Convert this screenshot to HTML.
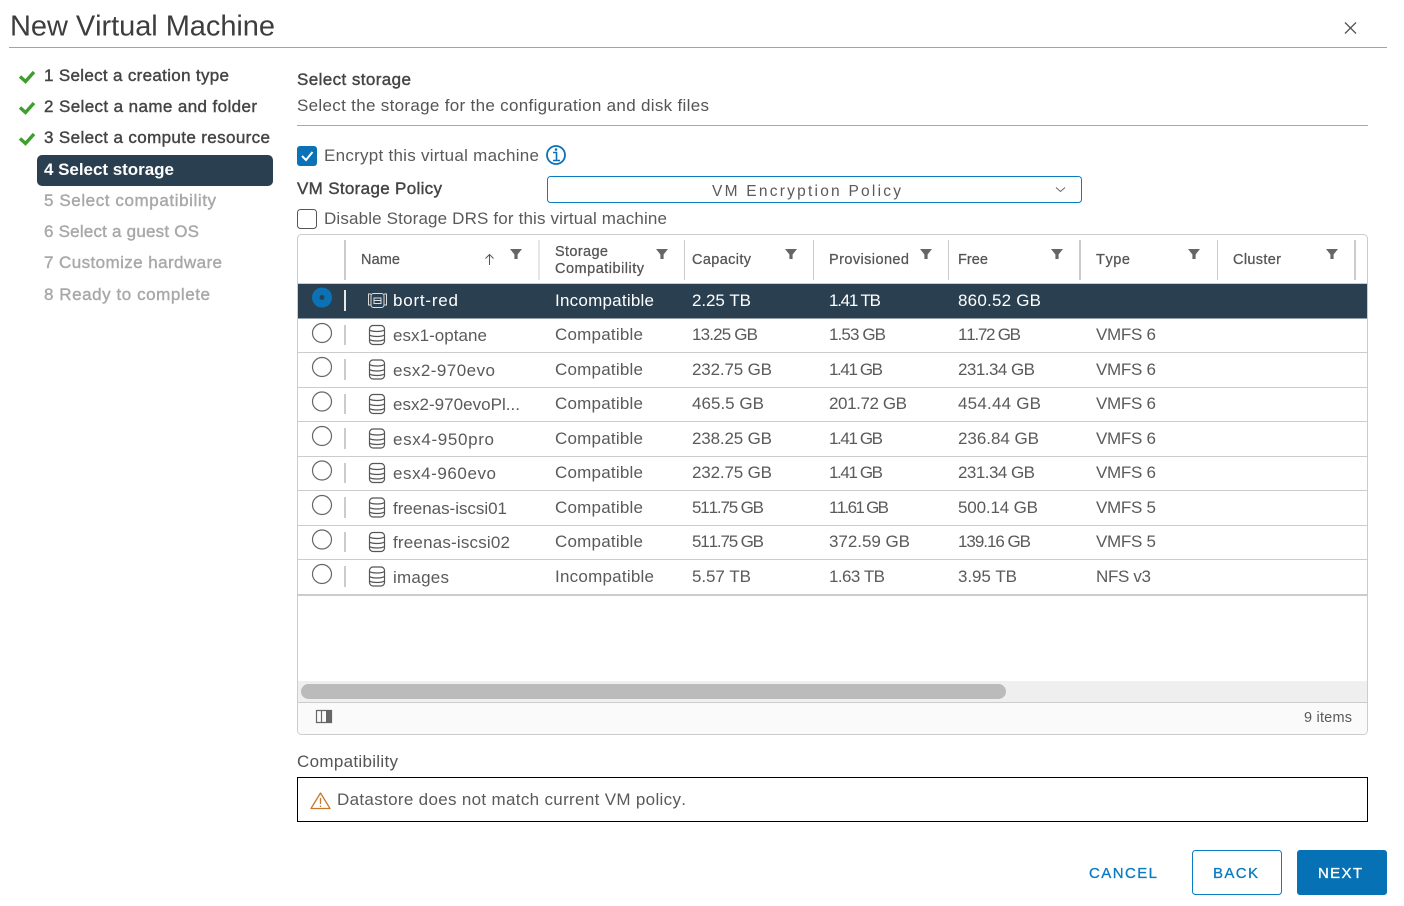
<!DOCTYPE html>
<html lang="en"><head><meta charset="utf-8"><title>New Virtual Machine</title>
<style>
html,body{margin:0;padding:0;background:#fff;width:1404px;height:906px;overflow:hidden}
svg{display:block}
text{font-family:"Liberation Sans",sans-serif;font-size:17px;fill:#5a5a5a;white-space:pre;font-kerning:none}
.w{font-size:17px;fill:#444;stroke:#444;stroke-width:.4}
.d{font-size:17px;fill:#a8a8a8;stroke:#a8a8a8;stroke-width:.4}
.s{fill:#fff}
.b{fill:#444;stroke:#444;stroke-width:.4}
.h{font-size:14.5px;fill:#555;stroke:#555;stroke-width:.25}
.btn{font-size:15px;letter-spacing:2px;stroke-width:.3}
.sep{stroke:#ccc;stroke-width:2}
.rl{stroke:#ccc;stroke-width:1}
.radio{fill:#fff;stroke:#666;stroke-width:1.2}
.f{fill:#666}
.db{fill:none;stroke:#555;stroke-width:1.2}
</style></head><body>
<svg width="1404" height="906" viewBox="0 0 1404 906" xmlns="http://www.w3.org/2000/svg">
<defs>
<g id="flt"><path d="M-6 -5H6L1.6 0.5V5H-1.6V0.5Z" class="f"/></g>
<g id="db"><rect x="1" y="1" width="15" height="19" rx="3.5" class="db"/><path d="M1 5.5C4 7.5 13 7.5 16 5.5M1 10.5C4 12.5 13 12.5 16 10.5M1 15C4 17 13 17 16 15" class="db"/></g>
</defs>

<text x="10" y="35.500" textLength="265" style="font-size:29px;fill:#3d3d3d">New Virtual Machine</text>
<line x1="9" x2="1387" y1="47.5" y2="47.5" stroke="#a3a3a3"/>
<path d="M1345 22.500L1356 33.500M1356 22.500L1345 33.500" stroke="#555" stroke-width="1.300" fill="none"/>

<path d="M20 76.500L25.500 81.500L34 72" stroke="#3f9e2f" stroke-width="3.400" fill="none"/>
<path d="M20 107.500L25.500 112.500L34 103" stroke="#3f9e2f" stroke-width="3.400" fill="none"/>
<path d="M20 138.500L25.500 143.500L34 134" stroke="#3f9e2f" stroke-width="3.400" fill="none"/>
<text class="w" x="44" y="81" textLength="185">1 Select a creation type</text>
<text class="w" x="44" y="112" textLength="213">2 Select a name and folder</text>
<text class="w" x="44" y="143" textLength="226">3 Select a compute resource</text>
<rect x="37" y="155" width="236" height="31" rx="5" fill="#2a3f4f"/>
<text class="s" x="44" y="175" textLength="130" style="font-size:17px;font-weight:bold">4 Select storage</text>
<text class="d" x="44" y="206" textLength="172">5 Select compatibility</text>
<text class="d" x="44" y="237" textLength="155">6 Select a guest OS</text>
<text class="d" x="44" y="268" textLength="178">7 Customize hardware</text>
<text class="d" x="44" y="300" textLength="166">8 Ready to complete</text>

<text class="b" x="297" y="85" textLength="114">Select storage</text>
<text x="297" y="111" textLength="412" style="fill:#555">Select the storage for the configuration and disk files</text>
<line x1="297" x2="1368" y1="125.500" y2="125.500" stroke="#a8a8a8"/>

<rect x="297" y="146" width="20" height="20" rx="3" fill="#0a72b5"/>
<path d="M302 156L306 160L312.500 152" stroke="#fff" stroke-width="2" fill="none"/>
<text x="324" y="161" textLength="215">Encrypt this virtual machine</text>
<circle cx="556" cy="155" r="9" fill="#fff" stroke="#0a72b5" stroke-width="1.800"/>
<path d="M553 152.500H556.500V160M553 160.500H560" stroke="#0a72b5" stroke-width="1.600" fill="none"/><circle cx="556" cy="149.500" r="1.300" fill="#0a72b5"/>
<text class="b" x="297" y="194" textLength="145">VM Storage Policy</text>
<rect x="547.500" y="176.500" width="534" height="26" rx="3" fill="#fff" stroke="#0a7cc1"/>
<text x="712" y="196" textLength="189" style="font-size:15.500px">VM Encryption Policy</text>
<path d="M1056 187.500L1060.500 191.500L1065 187.500" stroke="#666" fill="none"/>
<rect x="297.500" y="209.500" width="19" height="19" rx="3" fill="#fff" stroke="#555"/>
<text x="324" y="224" textLength="343">Disable Storage DRS for this virtual machine</text>

<rect x="297.500" y="234.500" width="1070" height="500" rx="4" fill="#fff" stroke="#ccc"/>
<path d="M298 681H1367V702H298Z" fill="#efefef"/>
<rect x="301" y="684" width="705" height="15" rx="7.500" fill="#bbb"/>
<path d="M298 703H1367V730a4 4 0 0 1-4 4H302a4 4 0 0 1-4-4Z" fill="#fafafa"/>
<line x1="298" x2="1367" y1="702.500" y2="702.500" stroke="#ccc"/>
<path d="M316.500 710.500H331.500V722.500H316.500ZM321.500 710.500V722.500" stroke="#666" stroke-width="1.200" fill="none"/><rect x="326" y="710" width="6" height="13" fill="#666"/>
<text x="1304" y="722" textLength="48" style="font-size:14.500px">9 items</text>

<line class="sep" x1="345" x2="345" y1="240" y2="280"/>
<line class="sep" x1="539" x2="539" y1="240" y2="280" style="stroke-width:1"/>
<line class="sep" x1="684.500" x2="684.500" y1="240" y2="280" style="stroke-width:1"/>
<line class="sep" x1="813.500" x2="813.500" y1="240" y2="280" style="stroke-width:1"/>
<line class="sep" x1="948.500" x2="948.500" y1="240" y2="280" style="stroke-width:1"/>
<line class="sep" x1="1080" x2="1080" y1="240" y2="280"/>
<line class="sep" x1="1217.500" x2="1217.500" y1="240" y2="280" style="stroke-width:1"/>
<line class="sep" x1="1355" x2="1355" y1="240" y2="280"/>
<text class="h" x="361" y="264" textLength="39">Name</text>
<path d="M489.500 265V254.500M485.500 258.500L489.500 254.500L493.500 258.500" stroke="#555" fill="none"/>
<use href="#flt" x="516" y="254"/>
<text class="h" x="555" y="256" textLength="53">Storage</text>
<text class="h" x="555" y="273" textLength="89">Compatibility</text>
<use href="#flt" x="662" y="254"/>
<text class="h" x="692" y="264" textLength="59">Capacity</text>
<use href="#flt" x="791" y="254"/>
<text class="h" x="829" y="264" textLength="80">Provisioned</text>
<use href="#flt" x="926" y="254"/>
<text class="h" x="958" y="264" textLength="30">Free</text>
<use href="#flt" x="1057" y="254"/>
<text class="h" x="1096" y="264" textLength="34">Type</text>
<use href="#flt" x="1194" y="254"/>
<text class="h" x="1233" y="264" textLength="48">Cluster</text>
<use href="#flt" x="1332" y="254"/>

<line class="rl" x1="298" x2="1367" y1="283.500" y2="283.500"/>
<rect x="298" y="284" width="1069" height="34.500" fill="#2a3f4f"/>
<line class="rl" x1="298" x2="1367" y1="352.500" y2="352.500"/>
<line class="rl" x1="298" x2="1367" y1="387.500" y2="387.500"/>
<line class="rl" x1="298" x2="1367" y1="421.500" y2="421.500"/>
<line class="rl" x1="298" x2="1367" y1="456.500" y2="456.500"/>
<line class="rl" x1="298" x2="1367" y1="490.500" y2="490.500"/>
<line class="rl" x1="298" x2="1367" y1="525.500" y2="525.500"/>
<line class="rl" x1="298" x2="1367" y1="559.500" y2="559.500"/>
<line x1="298" x2="1367" y1="595" y2="595" stroke="#ccc" stroke-width="2"/>

<circle cx="322" cy="297.500" r="10" fill="#0a72b5"/><circle cx="322" cy="297.500" r="2.500" fill="#2a3f4f"/>
<line x1="345" x2="345" y1="290" y2="311" stroke="#e8e8e8" stroke-width="2"/>
<path d="M371 294H368.500V305H371M384 294H386.500V305H384" stroke="#ddd" fill="none"/><rect x="371" y="293.500" width="13" height="14" rx="2.500" fill="none" stroke="#ddd"/><path d="M374 298H381V303.500H374ZM374 300.500H381" stroke="#ddd" fill="none"/>
<text class="s" x="393" y="306" textLength="65">bort-red</text>
<text class="s" x="555" y="306" textLength="99">Incompatible</text>
<text class="s" x="692" y="306" textLength="59">2.25 TB</text>
<text class="s" x="829" y="306" textLength="52">1.41 TB</text>
<text class="s" x="958" y="306" textLength="83">860.52 GB</text>

<circle class="radio" cx="322" cy="333" r="9.500"/><line class="sep" x1="345" x2="345" y1="325" y2="345"/><use href="#db" x="368.500" y="324.500"/>
<text x="393" y="341" textLength="94">esx1-optane</text><text x="555" y="340" textLength="88">Compatible</text><text x="692" y="340" textLength="66">13.25 GB</text><text x="829" y="340" textLength="57">1.53 GB</text><text x="958" y="340" textLength="63">11.72 GB</text><text x="1096" y="340" textLength="60">VMFS 6</text>

<circle class="radio" cx="322" cy="367" r="9.500"/><line class="sep" x1="345" x2="345" y1="359" y2="380"/><use href="#db" x="368.500" y="359"/>
<text x="393" y="376" textLength="102">esx2-970evo</text><text x="555" y="375" textLength="88">Compatible</text><text x="692" y="375" textLength="80">232.75 GB</text><text x="829" y="375" textLength="54">1.41 GB</text><text x="958" y="375" textLength="77">231.34 GB</text><text x="1096" y="375" textLength="60">VMFS 6</text>

<circle class="radio" cx="322" cy="401.500" r="9.500"/><line class="sep" x1="345" x2="345" y1="394" y2="414"/><use href="#db" x="368.500" y="393.500"/>
<text x="393" y="410" textLength="127">esx2-970evoPl...</text><text x="555" y="409" textLength="88">Compatible</text><text x="692" y="409" textLength="72">465.5 GB</text><text x="829" y="409" textLength="78">201.72 GB</text><text x="958" y="409" textLength="83">454.44 GB</text><text x="1096" y="409" textLength="60">VMFS 6</text>

<circle class="radio" cx="322" cy="436" r="9.500"/><line class="sep" x1="345" x2="345" y1="428" y2="449"/><use href="#db" x="368.500" y="428"/>
<text x="393" y="445" textLength="101">esx4-950pro</text><text x="555" y="444" textLength="88">Compatible</text><text x="692" y="444" textLength="80">238.25 GB</text><text x="829" y="444" textLength="54">1.41 GB</text><text x="958" y="444" textLength="81">236.84 GB</text><text x="1096" y="444" textLength="60">VMFS 6</text>

<circle class="radio" cx="322" cy="470.500" r="9.500"/><line class="sep" x1="345" x2="345" y1="463" y2="483"/><use href="#db" x="368.500" y="462.500"/>
<text x="393" y="479" textLength="103">esx4-960evo</text><text x="555" y="478" textLength="88">Compatible</text><text x="692" y="478" textLength="80">232.75 GB</text><text x="829" y="478" textLength="54">1.41 GB</text><text x="958" y="478" textLength="77">231.34 GB</text><text x="1096" y="478" textLength="60">VMFS 6</text>

<circle class="radio" cx="322" cy="505" r="9.500"/><line class="sep" x1="345" x2="345" y1="497" y2="518"/><use href="#db" x="368.500" y="497"/>
<text x="393" y="514" textLength="114">freenas-iscsi01</text><text x="555" y="513" textLength="88">Compatible</text><text x="692" y="513" textLength="72">511.75 GB</text><text x="829" y="513" textLength="60">11.61 GB</text><text x="958" y="513" textLength="80">500.14 GB</text><text x="1096" y="513" textLength="60">VMFS 5</text>

<circle class="radio" cx="322" cy="539.500" r="9.500"/><line class="sep" x1="345" x2="345" y1="532" y2="552"/><use href="#db" x="368.500" y="531.500"/>
<text x="393" y="548" textLength="117">freenas-iscsi02</text><text x="555" y="547" textLength="88">Compatible</text><text x="692" y="547" textLength="72">511.75 GB</text><text x="829" y="547" textLength="81">372.59 GB</text><text x="958" y="547" textLength="73">139.16 GB</text><text x="1096" y="547" textLength="60">VMFS 5</text>

<circle class="radio" cx="322" cy="574" r="9.500"/><line class="sep" x1="345" x2="345" y1="566" y2="587"/><use href="#db" x="368.500" y="566"/>
<text x="393" y="583" textLength="56">images</text><text x="555" y="582" textLength="99">Incompatible</text><text x="692" y="582" textLength="59">5.57 TB</text><text x="829" y="582" textLength="56">1.63 TB</text><text x="958" y="582" textLength="59">3.95 TB</text><text x="1096" y="582" textLength="55">NFS v3</text>

<text x="297" y="767" textLength="101" style="fill:#555">Compatibility</text>
<rect x="297.500" y="777.500" width="1070" height="44" fill="#fff" stroke="#000"/>
<path d="M320.500 793L330 808.500H311Z" fill="none" stroke="#c27b2e" stroke-width="1.300" stroke-linejoin="round"/><path d="M320.500 798V804M320.500 805.500V807" stroke="#c27b2e" stroke-width="1.300"/>
<text x="337" y="805" textLength="349">Datastore does not match current VM policy.</text>

<text class="btn" x="1089" y="878" textLength="70" style="fill:#0a7cc1;stroke:#0a7cc1">CANCEL</text>
<rect x="1192.500" y="850.500" width="89" height="44" rx="3" fill="#fff" stroke="#0a7cc1"/>
<text class="btn" x="1213" y="878" textLength="47" style="fill:#0a7cc1;stroke:#0a7cc1">BACK</text>
<rect x="1297" y="850" width="90" height="45" rx="3" fill="#0672b5"/>
<text class="btn" x="1318" y="878" textLength="46" style="fill:#fff;stroke:#fff">NEXT</text>
</svg>
</body></html>
